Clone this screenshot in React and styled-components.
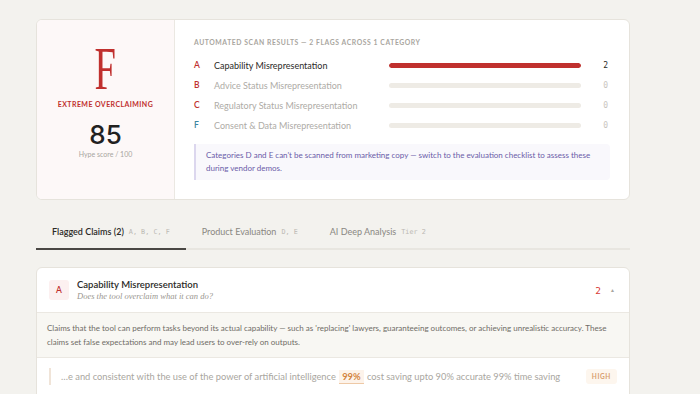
import React from 'react';
import styled, { createGlobalStyle } from 'styled-components';

const GlobalStyle = createGlobalStyle`
  html, body {
    margin: 0;
    padding: 0;
    background: #f3f2ee;
    font-family: 'Source Sans Pro', Lato, 'Noto Sans', sans-serif;
    color: #2b2a27;
  }
`;

const Page = styled.div`
  width: 594px;
  padding: 19px 0 0 36px;
  height: 394px;
  box-sizing: content-box;
  overflow: hidden;
`;

const ScoreCard = styled.div`
  display: grid;
  grid-template-columns: 138px 1fr;
  height: 181px;
  background: #fff;
  border: 1px solid #e6e3dc;
  border-radius: 6px;
  overflow: hidden;
  box-sizing: border-box;
`;

const GradePanel = styled.div`
  background: #fdf8f8;
  border-right: 1px solid #ebe8e2;
  display: flex;
  flex-direction: column;
  align-items: center;
  padding-top: 17px;
`;

const Grade = styled.div`
  font-family: 'Liberation Serif', 'DejaVu Serif', serif;
  font-size: 62px;
  line-height: 62px;
  color: #c0302e;
  transform: scaleX(0.62);
`;

const Verdict = styled.div`
  margin-top: 1px;
  font-size: 7px;
  font-weight: 700;
  letter-spacing: 0.06em;
  color: #c0302e;
`;

const Score = styled.div`
  margin-top: 13px;
  font-family: Inter, 'Noto Sans', sans-serif;
  font-size: 26px;
  line-height: 28px;
  font-weight: 500;
  color: #22211f;
`;

const ScoreLabel = styled.div`
  margin-top: 1px;
  font-size: 7px;
  color: #a8a5a0;
`;

const Results = styled.div`
  padding: 18px 19px 0 19px;
  display: flex;
  flex-direction: column;
`;

const Heading = styled.div`
  font-size: 6.8px;
  font-weight: 700;
  letter-spacing: 0.085em;
  color: #a9a6a0;
  margin-bottom: 9px;
`;

const Row = styled.div`
  display: grid;
  grid-template-columns: 20px 175px 192px 1fr;
  align-items: center;
  height: 20px;
`;

const Letter = styled.span`
  font-size: 8.5px;
  font-weight: 600;
  color: ${({ $c }) => $c};
`;

const CatName = styled.span`
  font-size: 9px;
  color: ${({ $active }) => ($active ? '#2b2a27' : '#aeaba6')};
`;

const Track = styled.div`
  height: 5px;
  border-radius: 3px;
  background: #eeebe5;
  overflow: hidden;
`;

const Fill = styled.div`
  height: 100%;
  border-radius: 3px;
  background: #c0302e;
`;

const Count = styled.span`
  font-family: 'DejaVu Sans Mono', monospace;
  font-size: 8px;
  text-align: right;
  padding-right: 2px;
  color: ${({ $active }) => ($active ? '#2b2a27' : '#c9c6c0')};
`;

const Note = styled.div`
  margin-top: 9px;
  background: #f9f8fc;
  border-left: 2px solid #dcd7ee;
  border-radius: 0 4px 4px 0;
  padding: 5px 10px 5px 10px;
  font-size: 8px;
  line-height: 13px;
  color: #6b5ca8;
`;

const Tabs = styled.div`
  display: flex;
  margin-top: 19px;
  height: 29px;
  border-bottom: 2px solid #e8e6e0;
`;

const Tab = styled.div`
  display: flex;
  align-items: center;
  gap: 5px;
  padding: 0 16px 4px 16px;
  margin-bottom: -2px;
  border-bottom: 2px solid ${({ $active }) => ($active ? '#4a4844' : 'transparent')};
  font-size: 9px;
  font-weight: ${({ $active }) => ($active ? 600 : 400)};
  color: ${({ $active }) => ($active ? '#2b2a27' : '#8a8782')};
`;

const TabTag = styled.span`
  font-family: 'DejaVu Sans Mono', monospace;
  font-size: 6.8px;
  font-weight: 400;
  color: #bcb9b3;
`;

const ClaimCard = styled.div`
  margin-top: 17px;
  background: #fff;
  border: 1px solid #e6e3dc;
  border-radius: 6px 6px 0 0;
  overflow: hidden;
`;

const ClaimHeader = styled.div`
  display: flex;
  align-items: center;
  gap: 8px;
  height: 44px;
  padding: 0 12px;
  border-bottom: 1px solid #ebe8e2;
`;

const Badge = styled.div`
  width: 20px;
  height: 20px;
  border-radius: 3px;
  background: #fcf0f0;
  color: #c0302e;
  font-size: 8.5px;
  font-weight: 600;
  display: flex;
  align-items: center;
  justify-content: center;
`;

const TitleBlock = styled.div`
  flex: 1;
  display: flex;
  flex-direction: column;
  gap: 1px;
`;

const ClaimTitle = styled.div`
  font-size: 9.5px;
  font-weight: 600;
  color: #2b2a27;
`;

const ClaimSub = styled.div`
  font-family: 'Liberation Serif', serif;
  font-style: italic;
  font-size: 8.5px;
  color: #9a968f;
`;

const FlagCount = styled.span`
  font-family: 'DejaVu Sans Mono', monospace;
  font-size: 9.5px;
  color: #d83a36;
`;

const Caret = styled.span`
  font-size: 5px;
  color: #a8a5a0;
  margin-left: 1px;
  margin-right: 2px;
`;

const Description = styled.div`
  background: #f8f7f3;
  padding: 8px 10px;
  border-bottom: 1px solid #ebe8e2;
  font-size: 8px;
  line-height: 14px;
  color: #6f6c66;
`;

const Claim = styled.div`
  display: flex;
  align-items: center;
  height: 36px;
  padding: 0 12px;
`;

const Quote = styled.div`
  flex: 1;
  border-left: 2px solid #f0e4d8;
  padding-left: 10px;
  font-size: 9.3px;
  line-height: 17px;
  color: #a9a6a0;
  white-space: nowrap;
`;

const Hit = styled.mark`
  background: #fdf3ea;
  color: #d4843e;
  font-weight: 700;
  padding: 1px 3px;
  margin: 0 1px;
  border-bottom: 1px solid #eec9a6;
`;

const Severity = styled.span`
  background: #fdf6ee;
  color: #d8a070;
  border-radius: 3px;
  font-size: 6.5px;
  font-weight: 700;
  letter-spacing: 0.1em;
  padding: 4px 6px;
`;

const categories = [
  { id: 'A', name: 'Capability Misrepresentation', count: 2, color: '#c0302e' },
  { id: 'B', name: 'Advice Status Misrepresentation', count: 0, color: '#c0302e' },
  { id: 'C', name: 'Regulatory Status Misrepresentation', count: 0, color: '#c0302e' },
  { id: 'F', name: 'Consent & Data Misrepresentation', count: 0, color: '#3a86a0' },
];

export default function App() {
  const max = 2;
  return (
    <>
      <GlobalStyle />
      <Page>
        <ScoreCard>
          <GradePanel>
            <Grade>F</Grade>
            <Verdict>EXTREME OVERCLAIMING</Verdict>
            <Score>85</Score>
            <ScoreLabel>Hype score / 100</ScoreLabel>
          </GradePanel>
          <Results>
            <Heading>AUTOMATED SCAN RESULTS — 2 FLAGS ACROSS 1 CATEGORY</Heading>
            {categories.map((c) => (
              <Row key={c.id}>
                <Letter $c={c.color}>{c.id}</Letter>
                <CatName $active={c.count > 0}>{c.name}</CatName>
                <Track>
                  <Fill style={{ width: `${(c.count / max) * 100}%` }} />
                </Track>
                <Count $active={c.count > 0}>{c.count}</Count>
              </Row>
            ))}
            <Note>
              Categories D and E can't be scanned from marketing copy — switch to the evaluation checklist to assess these
              during vendor demos.
            </Note>
          </Results>
        </ScoreCard>

        <Tabs>
          <Tab $active>
            Flagged Claims (2) <TabTag>A, B, C, F</TabTag>
          </Tab>
          <Tab>
            Product Evaluation <TabTag>D, E</TabTag>
          </Tab>
          <Tab>
            AI Deep Analysis <TabTag>Tier 2</TabTag>
          </Tab>
        </Tabs>

        <ClaimCard>
          <ClaimHeader>
            <Badge>A</Badge>
            <TitleBlock>
              <ClaimTitle>Capability Misrepresentation</ClaimTitle>
              <ClaimSub>Does the tool overclaim what it can do?</ClaimSub>
            </TitleBlock>
            <FlagCount>2</FlagCount>
            <Caret>▲</Caret>
          </ClaimHeader>
          <Description>
            Claims that the tool can perform tasks beyond its actual capability — such as 'replacing' lawyers, guaranteeing
            outcomes, or achieving unrealistic accuracy. These claims set false expectations and may lead users to over-rely on
            outputs.
          </Description>
          <Claim>
            <Quote>
              …e and consistent with the use of the power of artificial intelligence <Hit>99%</Hit> cost saving upto 90% accurate
              99% time saving
            </Quote>
            <Severity>HIGH</Severity>
          </Claim>
        </ClaimCard>
      </Page>
    </>
  );
}
